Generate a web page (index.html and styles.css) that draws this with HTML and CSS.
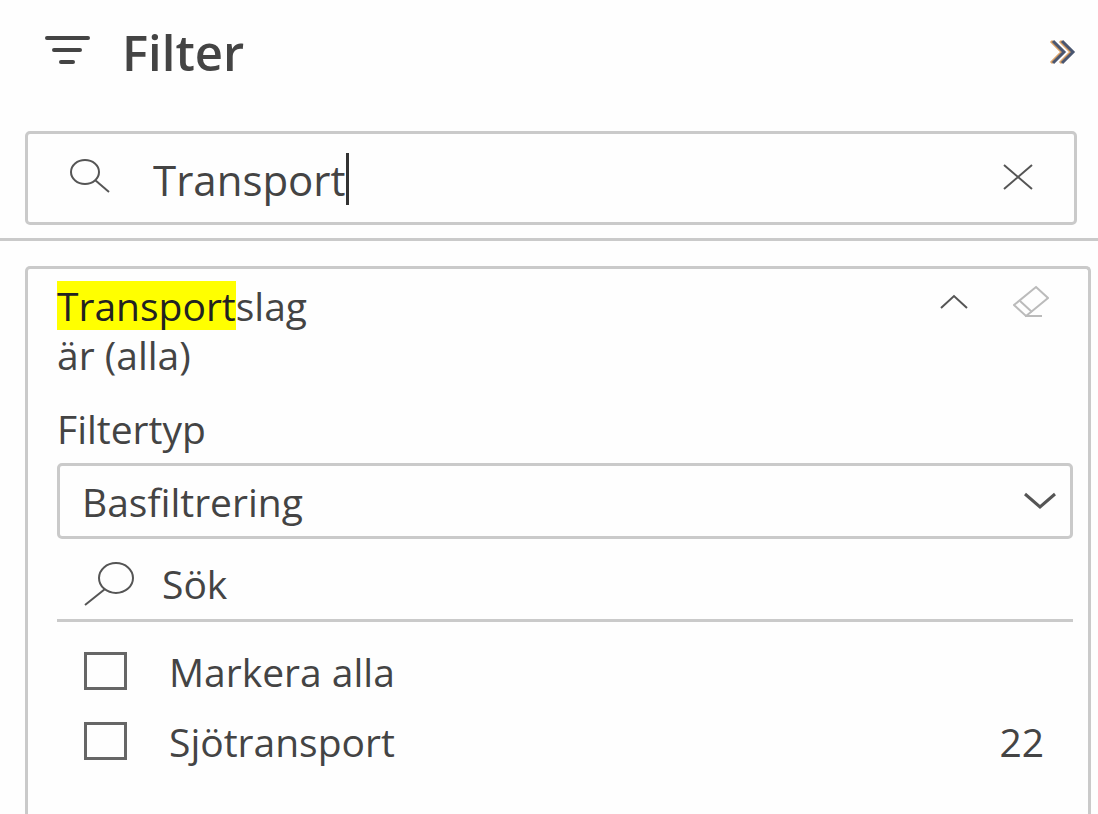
FILE: index.html
```html
<!DOCTYPE html>
<html lang="sv">

<head>
    <meta charset="UTF-8">
    <meta name="viewport" content="width=device-width, initial-scale=1.0">
    <title>Filter</title>
    <link rel="stylesheet" href="styles.css">
</head>

<body>
    <aside class="pane">
        <header class="pane-header">
            <svg class="icon-filter" width="46" height="32" viewBox="0 0 46 32" aria-hidden="true">
                <path d="M3 4h41M10 16h26M17 28h12" />
            </svg>
            <h1>Filter</h1>
            <button class="icon-btn" type="button" aria-label="Dölj filterfönstret">
                <svg width="28" height="28" viewBox="0 0 28 28" aria-hidden="true">
                    <path class="edge" d="M3 3L14 14L3 25" />
                    <path class="thick" d="M5 3L16 14L5 25" />
                    <path class="edge" d="M12 3L23 14L12 25" />
                    <path class="thick" d="M14 3L25 14L14 25" />
                </svg>
            </button>
        </header>

        <div class="search-box">
            <svg width="42" height="38" viewBox="0 0 42 38" aria-hidden="true">
                <ellipse cx="16" cy="14" rx="14" ry="12" />
                <path d="M26 22L40 34" />
            </svg>
            <div class="search-field">
                <input class="search-input" type="text" size="8" value="Transport" aria-label="Sök efter filter">
                <span class="caret"></span>
            </div>
            <button class="icon-btn" type="button" aria-label="Rensa sökningen">
                <svg width="32" height="28" viewBox="0 0 32 28" aria-hidden="true">
                    <path d="M2 2L30 26M30 2L2 26" />
                </svg>
            </button>
        </div>

        <section class="filters">
            <div class="card">
                <div class="card-header">
                    <div class="card-title">
                        <h2><mark>Transport</mark>slag</h2>
                        <p>är (alla)</p>
                    </div>
                    <button class="icon-btn" type="button" aria-label="Dölj filterkortet">
                        <svg width="30" height="16" viewBox="0 0 30 16" aria-hidden="true">
                            <path d="M2 14L15 2L28 14" />
                        </svg>
                    </button>
                    <button class="icon-btn faded" type="button" aria-label="Rensa filtret">
                        <svg width="36" height="34" viewBox="0 0 36 34" aria-hidden="true">
                            <path d="M23 2L35 13L18 27L13 31L1 20Z" />
                            <path d="M7 16L19 27" />
                            <path d="M12 31H29" />
                        </svg>
                    </button>
                </div>

                <label class="type-label" for="filtertype">Filtertyp</label>
                <div class="select-wrap">
                    <select id="filtertype">
                        <option selected>Basfiltrering</option>
                        <option>Avancerad filtrering</option>
                    </select>
                    <svg width="36" height="20" viewBox="0 0 36 20" aria-hidden="true">
                        <path d="M3 3L18 16L33 3" />
                    </svg>
                </div>

                <div class="value-search">
                    <svg width="50" height="46" viewBox="0 0 50 46" aria-hidden="true">
                        <ellipse cx="32" cy="17" rx="17" ry="15" />
                        <path d="M21 28L1 44" />
                    </svg>
                    <input type="text" placeholder="Sök" aria-label="Sök">
                </div>

                <ul class="values">
                    <li>
                        <input type="checkbox" id="all">
                        <label for="all">Markera alla</label>
                    </li>
                    <li>
                        <input type="checkbox" id="sea">
                        <label for="sea">Sjötransport</label>
                        <span>22</span>
                    </li>
                </ul>
            </div>
        </section>
    </aside>
</body>

</html>
```
FILE: styles.css
```css
* {
    box-sizing: border-box;
}

body {
    margin: 0;
    background-color: #fefefe;
    color: #444;
    font-family: "Open Sans", "Noto Sans", sans-serif;
    font-size: 39px;
    line-height: 49px;
}

h1, h2, p, ul {
    margin: 0;
    padding: 0;
}

input, select, button {
    font: inherit;
    color: inherit;
    background: none;
    border: none;
    border-radius: 0;
    margin: 0;
    padding: 0;
    outline: none;
}

svg {
    display: block;
    flex: none;
    fill: none;
    stroke: #555;
    stroke-width: 2;
}

.pane {
    display: flex;
    flex-direction: column;
    min-height: 100vh;
}

.pane-header {
    display: flex;
    align-items: flex-start;
    gap: 32px;
    height: 131px;
    padding: 26px 22px 0 44px;
}

.pane-header h1 {
    flex: 1;
    font-size: 49px;
    line-height: 52px;
    font-weight: 600;
}

.pane-header .icon-btn {
    height: 52px;
}

.icon-filter {
    margin-top: 8px;
    stroke: #444;
    stroke-width: 4;
    stroke-linecap: round;
}

.icon-btn {
    display: flex;
    align-items: center;
    cursor: pointer;
}

.thick {
    stroke: #4a5670;
    stroke-width: 3;
}

.edge {
    stroke: #d9a066;
    stroke-width: 3;
}

.search-box {
    display: flex;
    align-items: center;
    gap: 42px;
    height: 94px;
    margin: 0 21px 0 25px;
    padding: 0 40px 2px 41px;
    border: 3px solid #cacaca;
    border-radius: 5px;
}

.search-field {
    display: flex;
    flex: 1;
    align-items: center;
    padding-top: 4px;
}

.search-input {
    field-sizing: content;
    height: 60px;
    font-size: 42px;
}

.caret {
    width: 3px;
    height: 52px;
    background-color: #333;
}

.filters {
    display: flex;
    flex: 1;
    margin-top: 13px;
    padding: 25px 7px 0 25px;
    border-top: 3px solid #cacaca;
}

.card {
    flex: 1;
    padding: 12px 15px 0 29px;
    border: 3px solid #cacaca;
    border-bottom: none;
    border-radius: 5px 5px 0 0;
}

.card-header {
    display: flex;
    align-items: flex-start;
    gap: 44px;
    padding-right: 24px;
}

.card-header .icon-btn {
    height: 42px;
}

.card-title {
    flex: 1;
}

.card-title h2 {
    font-size: inherit;
    font-weight: 400;
}

mark {
    display: inline-block;
    background-color: #ff0;
    color: #222;
}

.faded svg {
    stroke: #bbb;
}

.type-label {
    display: block;
    margin-top: 25px;
}

.select-wrap {
    display: grid;
    align-items: center;
    margin-top: 10px;
}

.select-wrap select,
.select-wrap svg {
    grid-area: 1 / 1;
}

.select-wrap select {
    appearance: none;
    width: 100%;
    height: 76px;
    padding: 0 60px 0 22px;
    border: 3px solid #cacaca;
    border-radius: 5px;
}

.select-wrap svg {
    justify-self: end;
    margin-right: 15px;
    stroke-width: 3;
    pointer-events: none;
}

.value-search {
    display: flex;
    align-items: center;
    gap: 28px;
    height: 83px;
    padding: 9px 0 0 27px;
    border-bottom: 3px solid #cacaca;
}

.value-search input {
    flex: 1;
    min-width: 0;
    height: 60px;
}

.value-search input::placeholder {
    color: #444;
    opacity: 1;
}

.values {
    padding: 14px 29px 0 27px;
    list-style: none;
}

.values li {
    display: flex;
    align-items: center;
    height: 70px;
}

.values label {
    flex: 1;
    padding-left: 42px;
}

.values input {
    appearance: none;
    width: 43px;
    height: 38px;
    border: 3px solid #666;
}
```
